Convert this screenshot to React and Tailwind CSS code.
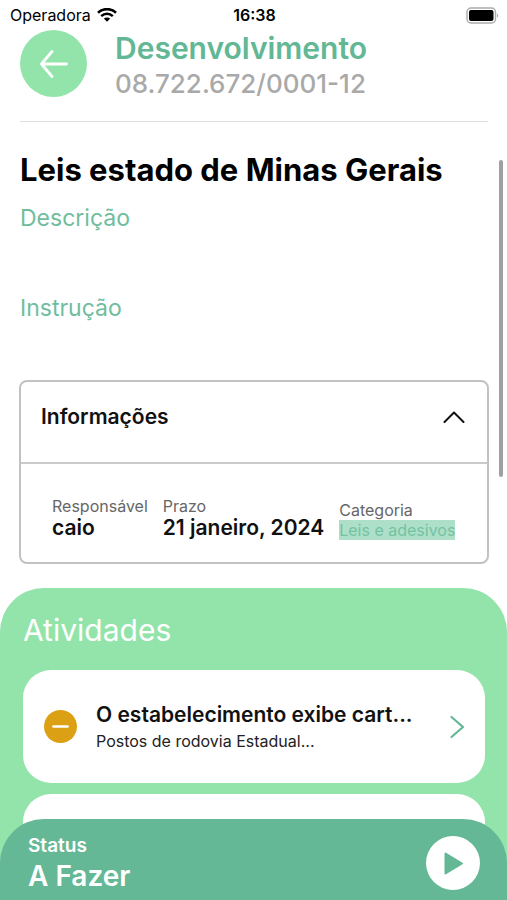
import React from "react";

function StatusBar() {
  return (
    <div className="flex h-[30px] items-center justify-between pl-[10px] pr-2 text-black">
      <div className="flex flex-1 items-center gap-[6px] text-[16px] leading-5">
        <span>Operadora</span>
        <svg className="h-[14px] w-5" viewBox="0 0 20 14" fill="none" stroke="currentColor" aria-hidden="true">
          <path d="M1 4.8C6 -0.1 14 -0.1 19 4.8" strokeWidth="2.6" />
          <path d="M4.2 8.1C7.5 5 12.5 5 15.8 8.1" strokeWidth="2.5" />
          <path d="M10 13.8L6.8 10.6C8.5 9 11.5 9 13.2 10.6Z" fill="currentColor" stroke="none" />
        </svg>
      </div>
      <time className="text-[16px] leading-5 font-semibold">16:38</time>
      <div className="flex flex-1 justify-end">
        <svg className="h-[17px] w-[33px]" viewBox="0 0 33 17" aria-hidden="true">
          <rect x="1" y="1" width="28.5" height="15" rx="4" fill="#fff" stroke="#aaa" strokeWidth="1.4" />
          <rect x="3" y="3" width="24.5" height="11" rx="2" fill="#000" />
          <path d="M31 6.5C32.6 7 32.6 10 31 10.500Z" fill="#aaa" />
        </svg>
      </div>
    </div>
  );
}

function Header() {
  return (
    <header className="mr-[19px] ml-5 flex h-[92px] items-start gap-7 border-b border-[#dedede]">
      <button type="button" aria-label="Voltar" className="flex size-[67px] shrink-0 items-center justify-center rounded-full bg-[#93e4aa] text-white">
        <svg className="size-7" viewBox="0 0 28 28" fill="none" stroke="currentColor" strokeWidth="2.8" strokeLinecap="round" strokeLinejoin="round" aria-hidden="true">
          <path d="M26.500 14H1.500M12 1.500L1.500 14L12 26.500" />
        </svg>
      </button>
      <div className="min-w-0">
        <p className="text-[30px] leading-9 font-semibold text-[#62b795]">Desenvolvimento</p>
        <p className="text-[26px] leading-9 font-medium text-[#a9a9a9]">08.722.672/0001-12</p>
      </div>
    </header>
  );
}

function InfoPanel() {
  return (
    <section className="mt-14 rounded-lg border-2 border-[#c2c2c2]">
      <h2 className="border-b-2 border-[#cacaca]">
        <button type="button" aria-expanded="true" className="flex h-20 w-full items-center justify-between pr-[22px] pb-[10px] pl-5 text-[21px] leading-7 font-semibold text-[#111]">
          Informações
          <svg className="h-3 w-[22px]" viewBox="0 0 22 12" fill="none" stroke="currentColor" strokeWidth="2" strokeLinecap="round" strokeLinejoin="round" aria-hidden="true">
            <path d="M1.500 11L11 1.500L20.500 11" />
          </svg>
        </button>
      </h2>
      <dl className="flex h-[98px] items-end gap-[15px] pr-5 pb-[22px] pl-[31px] whitespace-nowrap">
        <div>
          <dt className="text-[16px] leading-5 text-[#666]">Responsável</dt>
          <dd className="text-[21px] leading-6 font-semibold text-[#111]">caio</dd>
        </div>
        <div>
          <dt className="text-[16px] leading-5 text-[#666]">Prazo</dt>
          <dd className="text-[21px] leading-6 font-semibold text-[#111]">21 janeiro, 2024</dd>
        </div>
        <div>
          <dt className="text-[16px] leading-5 text-[#666]">Categoria</dt>
          <dd className="bg-[#addfc9] text-[16px] leading-5 text-[#74c3a2]">Leis e adesivos</dd>
        </div>
      </dl>
    </section>
  );
}

function Activities() {
  return (
    <section className="mt-6 rounded-t-[44px] bg-[#93e4aa] pr-[22px] pb-24 pl-[23px] pt-6">
      <h2 className="text-[30px] leading-9 text-white">Atividades</h2>
      <ul className="mt-[22px] flex flex-col gap-[11px]">
        <li>
          <button type="button" className="flex h-[113px] w-full items-center rounded-[28px] bg-white pr-5 pl-[21px] text-left">
            <svg className="size-[33px] shrink-0" viewBox="0 0 33 33" aria-hidden="true">
              <circle cx="16.500" cy="16.500" r="16.500" fill="#dba014" />
              <path d="M9.500 16.500H23.500" stroke="#fff" strokeWidth="2.600" strokeLinecap="round" />
            </svg>
            <span className="ml-[19px] min-w-0 flex-1 pt-px">
              <span className="block truncate text-[21px] leading-7 font-semibold text-[#111]">O estabelecimento exibe cart...</span>
              <span className="block truncate text-[16px] leading-6 text-[#222]">Postos de rodovia Estadual...</span>
            </span>
            <svg className="h-6 w-4 shrink-0 text-[#62b795]" viewBox="0 0 16 24" fill="none" stroke="currentColor" strokeWidth="2.200" strokeLinecap="round" strokeLinejoin="round" aria-hidden="true">
              <path d="M2.500 2L14 12L2.500 22" />
            </svg>
          </button>
        </li>
        <li className="h-[113px] rounded-[28px] bg-white" />
      </ul>
    </section>
  );
}

function StatusFooter() {
  return (
    <footer className="fixed inset-x-0 bottom-0 flex h-[81px] items-center justify-between rounded-t-[44px] bg-[#64b896] pt-[7px] pr-[27px] pl-7 text-white">
      <div className="pt-[2px]">
        <p className="text-[19px] leading-6 font-semibold">Status</p>
        <p className="text-[28px] leading-9 font-semibold">A Fazer</p>
      </div>
      <button type="button" aria-label="Iniciar" className="flex size-[54px] items-center justify-center rounded-full bg-white text-[#64b896]">
        <svg className="h-[23px] w-5" viewBox="0 0 20 23" fill="currentColor" stroke="currentColor" strokeWidth="2" strokeLinejoin="round" aria-hidden="true">
          <path d="M2.500 1.500V21.500L19 11.500Z" />
        </svg>
      </button>
    </footer>
  );
}

export default function App() {
  return (
    <div className="relative flex h-screen flex-col overflow-hidden bg-white font-['Inter','Liberation_Sans',sans-serif]">
      <StatusBar />
      <Header />
      <main className="min-h-0 flex-1 overflow-hidden">
        <div className="pr-[18px] pl-[19px] pt-7">
          <h1 className="pl-px text-[31px] leading-10 font-bold whitespace-nowrap text-black">Leis estado de Minas Gerais</h1>
          <h2 className="mt-3 pl-px text-[23px] leading-8 text-[#70bd9e]">Descrição</h2>
          <h2 className="mt-[58px] pl-px text-[23px] leading-8 text-[#70bd9e]">Instrução</h2>
          <InfoPanel />
        </div>
        <Activities />
      </main>
      <div className="absolute top-[160px] right-1 h-[317px] w-1 rounded-full bg-[#a0a0a0]" />
      <StatusFooter />
    </div>
  );
}
